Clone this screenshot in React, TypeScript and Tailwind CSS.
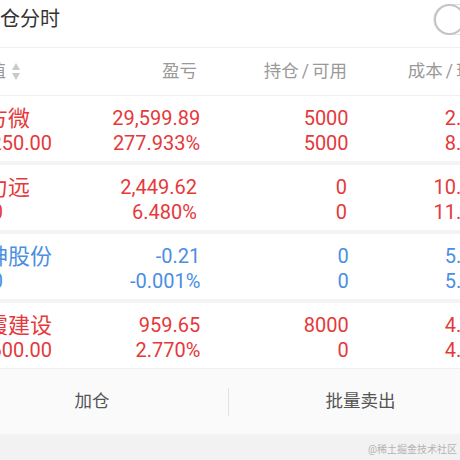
type Holding = {
  name: string;
  value: string;
  profit: string;
  ratio: string;
  hold: string;
  avail: string;
  cost: string;
  price: string;
  up: boolean;
};

const holdings: Holding[] = [
  { name: "芯方微", value: "40,250.00", profit: "29,599.89", ratio: "277.933%", hold: "5000", avail: "5000", cost: "2.130", price: "8.050", up: true },
  { name: "科力远", value: "0.00", profit: "2,449.62", ratio: "6.480%", hold: "0", avail: "0", cost: "10.562", price: "11.240", up: true },
  { name: "长神股份", value: "0.00", profit: "-0.21", ratio: "-0.001%", hold: "0", avail: "0", cost: "5.130", price: "5.280", up: false },
  { name: "云霞建设", value: "35,600.00", profit: "959.65", ratio: "2.770%", hold: "8000", avail: "0", cost: "4.330", price: "4.450", up: true },
];

function SortIcon() {
  return (
    <svg width="8" height="17" viewBox="0 0 8 17" className="ml-[6px]">
      <path d="M4 0 L8 7 L0 7 Z" fill="#c9c9c9" />
      <path d="M0 10 L8 10 L4 17 Z" fill="#c9c9c9" />
    </svg>
  );
}

function Row({ h }: { h: Holding }) {
  const color = h.up ? "text-[#e5393b]" : "text-[#4a8fe2]";
  return (
    <div className={`flex h-[65px] bg-white pt-[10px] pl-[8px] ${color}`}>
      <div className="flex-1 whitespace-nowrap">
        <div className="h-[25px] text-[22px] leading-[25px]">{h.name}</div>
        <div className="h-[25px] text-[20px] leading-[25px]">{h.value}</div>
      </div>
      <div className="w-[150px] text-right text-[20px] leading-[25px]">
        <div>{h.profit}</div>
        <div>{h.ratio}</div>
      </div>
      <div className="w-[150px] text-right text-[20px] leading-[25px]">
        <div>{h.hold}</div>
        <div>{h.avail}</div>
      </div>
      <div className="w-[148px] text-right text-[20px] leading-[25px]">
        <div>{h.cost}</div>
        <div>{h.price}</div>
      </div>
    </div>
  );
}

export default function App() {
  return (
    <div className="flex h-[460px] w-[460px] flex-col overflow-hidden bg-white font-['Roboto','Noto_Sans_CJK_SC',sans-serif]">
      <div className="-ml-[44px] w-[539px] shrink-0">
        {/* title */}
        <div className="flex h-[48px] items-start border-b border-[#efefef] pl-[24px]">
          <div className="mt-[9px] flex-1 text-[20px] leading-[20px] text-[#333]">持仓分时</div>
          <div className="mt-[4px] mr-[6px] flex h-[31px] w-[56px] items-center rounded-full border border-[#e4e4e4] bg-white">
            <div className="h-[31px] w-[31px] rounded-full border-2 border-[#c4c4c4] bg-white" />
          </div>
        </div>

        {/* column header */}
        <div className="flex h-[48px] items-center border-b border-[#efefef] pl-[8px] text-[17.5px] text-[#999]">
          <div className="flex flex-1 items-center pl-[7px] whitespace-nowrap">
            <span>市值</span>
            <SortIcon />
          </div>
          <div className="w-[150px] text-right">盈亏</div>
          <div className="w-[150px] text-right">
            持仓<span className="px-[3px]">/</span>可用
          </div>
          <div className="w-[148px] pr-[4px] text-right whitespace-nowrap">
            成本<span className="px-[3px]">/</span>现价
          </div>
        </div>

        {/* holdings */}
        <div className="flex flex-col gap-[4px] bg-[#f4f4f4]">
          {holdings.map((h) => (
            <Row key={h.name} h={h} />
          ))}
        </div>

        {/* actions */}
        <div className="flex h-[66px] items-center border-t border-[#efefef] bg-[#fafafa] text-[17.5px] text-[#555]">
          <div className="flex w-[272px] justify-center">加仓</div>
          <div className="h-[28px] w-px bg-[#e3e3e3]" />
          <div className="flex flex-1 justify-center pr-[3px]">批量卖出</div>
        </div>
      </div>

      <div className="flex flex-1 items-end justify-end bg-[#f2f2f2] pr-[3px] pb-[4px]">
        <span className="text-[10px] leading-[12px] text-[#b3b3b3]">@稀土掘金技术社区</span>
      </div>
    </div>
  );
}
